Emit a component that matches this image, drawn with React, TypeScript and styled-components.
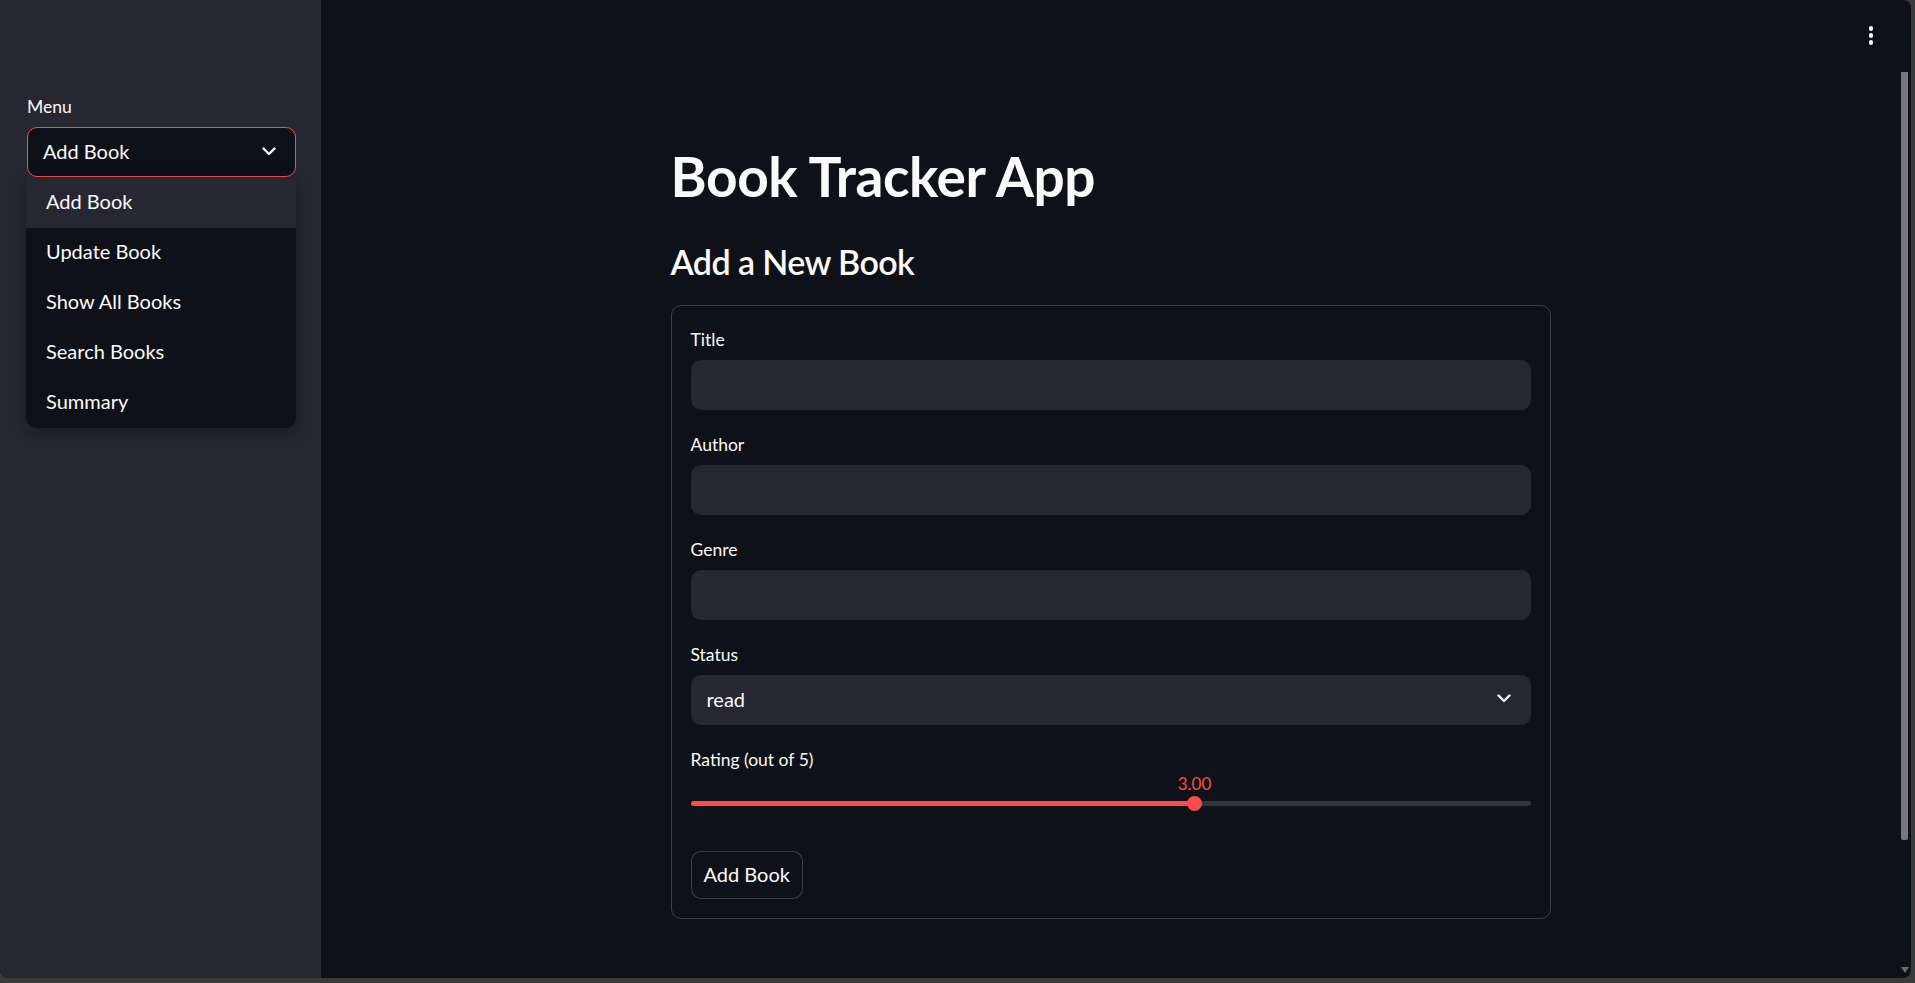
import React from "react";
import styled, { createGlobalStyle } from "styled-components";

const GlobalStyle = createGlobalStyle`
  html, body {
    margin: 0;
    padding: 0;
    background: #3a3a3a;
    overflow: hidden;
  }
  body {
    font-family: Lato, "Noto Sans", sans-serif;
    color: #fafafa;
  }
  * { box-sizing: border-box; }
`;

const Window = styled.div`
  width: 1911px;
  height: 978px;
  display: flex;
  overflow: hidden;
  border-radius: 0 8px 8px 8px;
  background: #0e1117;
`;

const Sidebar = styled.aside`
  width: 321px;
  flex: none;
  background: #262730;
  padding: 92px 25px 0 27px;
`;

const FieldLabel = styled.div`
  height: 30px;
  margin-bottom: 5px;
  display: flex;
  align-items: center;
  font-size: 17.5px;
  line-height: 1;
  color: #fafafa;
`;

const SelectWrap = styled.div`
  position: relative;
`;

const SelectBox = styled.div<{ $focused?: boolean; $dark?: boolean }>`
  height: 50px;
  border-radius: 10px;
  border: 1px solid ${(p) => (p.$focused ? "#ff4b4b" : "transparent")};
  background: ${(p) => (p.$dark ? "#0e1117" : "#262730")};
  display: flex;
  align-items: center;
  justify-content: space-between;
  padding: 0 19px 2px 15px;
  font-size: 20px;
  color: #fafafa;
`;

const Dropdown = styled.ul`
  position: absolute;
  top: calc(100% + 1px);
  left: -1px;
  right: 0;
  margin: 0;
  padding: 0;
  list-style: none;
  background: #0e1117;
  border-radius: 0 0 10px 10px;
  overflow: hidden;
  box-shadow: 0 4px 16px rgba(0, 0, 0, 0.35);
  z-index: 2;
`;

const DropItem = styled.li<{ $active?: boolean }>`
  height: 50px;
  display: flex;
  align-items: center;
  padding: 0 0 4px 20px;
  font-size: 20px;
  background: ${(p) => (p.$active ? "#262730" : "transparent")};
  color: #fafafa;
`;

const Main = styled.main`
  flex: 1;
  display: flex;
  position: relative;
`;

const ScrollArea = styled.div`
  flex: 1;
  display: flex;
  justify-content: center;
`;

const Content = styled.div`
  width: 880px;
  padding-top: 143px;
  display: flex;
  flex-direction: column;
`;

const Title = styled.h1`
  margin: 0;
  font-size: 55px;
  line-height: 1.2;
  font-weight: 700;
  letter-spacing: -0.4px;
  color: #fafafa;
`;

const Subtitle = styled.h2`
  margin: 33px 0 22px;
  font-size: 34px;
  line-height: 1.2;
  font-weight: 600;
  letter-spacing: -0.6px;
  color: #fafafa;
`;

const Form = styled.div`
  border: 1px solid rgba(250, 250, 250, 0.2);
  border-radius: 10px;
  padding: 19px;
  display: flex;
  flex-direction: column;
  gap: 20px;
`;

const Field = styled.div`
  display: flex;
  flex-direction: column;
`;

const TextInput = styled.div`
  height: 50px;
  border-radius: 10px;
  background: #262730;
`;

const SliderArea = styled.div`
  position: relative;
  height: 51px;
`;

const Track = styled.div`
  position: absolute;
  left: 0;
  right: 0;
  top: 21.5px;
  height: 5px;
  border-radius: 3px;
  background: #33353d;
`;

const Fill = styled.div`
  height: 100%;
  border-radius: 3px;
  background: #ff4b4b;
`;

const Thumb = styled.div`
  position: absolute;
  top: 16.5px;
  width: 15px;
  height: 15px;
  margin-left: -7.5px;
  border-radius: 50%;
  background: #ff4b4b;
`;

const ThumbValue = styled.div`
  position: absolute;
  top: -7px;
  transform: translateX(-50%);
  font-size: 17px;
  line-height: 22px;
  color: #ff4b4b;
  white-space: nowrap;
`;

const Button = styled.button`
  align-self: flex-start;
  height: 48px;
  padding: 0 12px 2px;
  border-radius: 10px;
  border: 1px solid rgba(250, 250, 250, 0.2);
  background: #0e1117;
  color: #fafafa;
  font-family: inherit;
  font-size: 20px;
`;

const MenuDots = styled.div`
  position: absolute;
  top: 26px;
  right: 37px;
  width: 6px;
  display: flex;
  flex-direction: column;
  gap: 2.5px;
  align-items: center;
`;

const Dot = styled.span`
  width: 4.5px;
  height: 4.5px;
  border-radius: 50%;
  background: #fafafa;
`;

const ScrollGutter = styled.div`
  width: 11px;
  flex: none;
  display: flex;
  flex-direction: column;
  align-items: flex-start;
  padding: 72px 0 5px 1px;
`;

const ScrollThumb = styled.div`
  width: 7px;
  height: 768px;
  background: #77787d;
  border-radius: 0 0 2px 2px;
`;

const ScrollArrow = styled.div`
  margin-top: auto;
  width: 0;
  height: 0;
  border-left: 4px solid transparent;
  border-right: 4px solid transparent;
  border-top: 6px solid #6b6c70;
`;

const Chevron = () => (
  <svg width="14" height="9" viewBox="0 0 14 9" fill="none">
    <path d="M1.5 1.5 L7 7 L12.5 1.5" stroke="#fafafa" strokeWidth="2.4" strokeLinecap="round" strokeLinejoin="round" />
  </svg>
);

const menuItems = ["Add Book", "Update Book", "Show All Books", "Search Books", "Summary"];

export default function App() {
  const rating = 3;
  const pct = (rating / 5) * 100;
  return (
    <>
      <GlobalStyle />
      <Window>
        <Sidebar>
          <FieldLabel>Menu</FieldLabel>
          <SelectWrap>
            <SelectBox $focused $dark>
              <span>Add Book</span>
              <Chevron />
            </SelectBox>
            <Dropdown>
              {menuItems.map((m, i) => (
                <DropItem key={m} $active={i === 0}>
                  {m}
                </DropItem>
              ))}
            </Dropdown>
          </SelectWrap>
        </Sidebar>
        <Main>
          <ScrollArea>
            <Content>
              <Title>Book Tracker App</Title>
              <Subtitle>Add a New Book</Subtitle>
              <Form>
                {["Title", "Author", "Genre"].map((l) => (
                  <Field key={l}>
                    <FieldLabel>{l}</FieldLabel>
                    <TextInput />
                  </Field>
                ))}
                <Field>
                  <FieldLabel>Status</FieldLabel>
                  <SelectBox>
                    <span>read</span>
                    <Chevron />
                  </SelectBox>
                </Field>
                <Field>
                  <FieldLabel>Rating (out of 5)</FieldLabel>
                  <SliderArea>
                    <Track>
                      <Fill style={{ width: `${pct}%` }} />
                    </Track>
                    <Thumb style={{ left: `${pct}%` }} />
                    <ThumbValue style={{ left: `${pct}%` }}>3.00</ThumbValue>
                  </SliderArea>
                </Field>
                <Button>Add Book</Button>
              </Form>
            </Content>
          </ScrollArea>
          <ScrollGutter>
            <ScrollThumb />
            <ScrollArrow />
          </ScrollGutter>
          <MenuDots>
            <Dot />
            <Dot />
            <Dot />
          </MenuDots>
        </Main>
      </Window>
    </>
  );
}
